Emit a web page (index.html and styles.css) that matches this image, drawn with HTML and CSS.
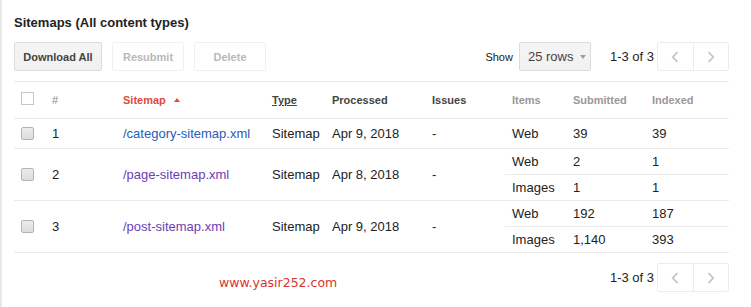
FILE: index.html
```html
<!DOCTYPE html>
<html lang="en">
<head>
    <meta charset="UTF-8">
    <title>Sitemaps</title>
    <link rel="stylesheet" href="styles.css">
</head>
<body>
<div class="page">
    <h2 class="title">Sitemaps (All content types)</h2>

    <div class="toolbar">
        <div class="actions">
            <button class="btn btn-primary">Download All</button>
            <button class="btn btn-disabled">Resubmit</button>
            <button class="btn btn-disabled">Delete</button>
        </div>
        <div class="paging">
            <span class="show-label">Show</span>
            <div class="rows-select">25 rows <span class="caret"></span></div>
            <span class="range">1-3 of 3</span>
            <div class="pager">
                <span class="pager-btn"><svg width="8" height="12" viewBox="0 0 8 12"><path d="M6.5 1 L1.8 6 L6.5 11" fill="none" stroke="#c4c4c4" stroke-width="1.8"/></svg></span>
                <span class="pager-btn"><svg width="8" height="12" viewBox="0 0 8 12"><path d="M1.5 1 L6.2 6 L1.5 11" fill="none" stroke="#c4c4c4" stroke-width="1.8"/></svg></span>
            </div>
        </div>
    </div>

    <table class="sitemaps">
        <colgroup>
            <col style="width:31px"><col style="width:71px"><col style="width:149px">
            <col style="width:60px"><col style="width:100px"><col style="width:80px">
            <col style="width:61px"><col style="width:79px"><col style="width:84px">
        </colgroup>
        <thead>
            <tr>
                <th><span class="check check-empty"></span></th>
                <th class="muted-normal">#</th>
                <th class="sorted">Sitemap <span class="sort-arrow"></span></th>
                <th class="underline">Type</th>
                <th>Processed</th>
                <th>Issues</th>
                <th class="muted">Items</th>
                <th class="muted">Submitted</th>
                <th class="muted">Indexed</th>
            </tr>
        </thead>
        <tbody>
            <tr class="single">
                <td><span class="check"></span></td>
                <td>1</td>
                <td><a href="#" class="link">/category-sitemap.xml</a></td>
                <td>Sitemap</td>
                <td>Apr 9, 2018</td>
                <td>-</td>
                <td>Web</td>
                <td>39</td>
                <td>39</td>
            </tr>
            <tr class="sub">
                <td rowspan="2"><span class="check"></span></td>
                <td rowspan="2">2</td>
                <td rowspan="2"><a href="#" class="link visited">/page-sitemap.xml</a></td>
                <td rowspan="2">Sitemap</td>
                <td rowspan="2">Apr 8, 2018</td>
                <td rowspan="2">-</td>
                <td>Web</td>
                <td>2</td>
                <td>1</td>
            </tr>
            <tr class="sub">
                <td>Images</td>
                <td>1</td>
                <td>1</td>
            </tr>
            <tr class="sub">
                <td rowspan="2"><span class="check"></span></td>
                <td rowspan="2">3</td>
                <td rowspan="2"><a href="#" class="link visited">/post-sitemap.xml</a></td>
                <td rowspan="2">Sitemap</td>
                <td rowspan="2">Apr 9, 2018</td>
                <td rowspan="2">-</td>
                <td>Web</td>
                <td>192</td>
                <td>187</td>
            </tr>
            <tr class="sub">
                <td>Images</td>
                <td>1,140</td>
                <td>393</td>
            </tr>
        </tbody>
    </table>

    <div class="footer">
        <span class="watermark">www.yasir252.com</span>
        <div class="paging">
            <span class="range">1-3 of 3</span>
            <div class="pager">
                <span class="pager-btn"><svg width="8" height="12" viewBox="0 0 8 12"><path d="M6.5 1 L1.8 6 L6.5 11" fill="none" stroke="#c4c4c4" stroke-width="1.8"/></svg></span>
                <span class="pager-btn"><svg width="8" height="12" viewBox="0 0 8 12"><path d="M1.5 1 L6.2 6 L1.5 11" fill="none" stroke="#c4c4c4" stroke-width="1.8"/></svg></span>
            </div>
        </div>
    </div>
</div>
</body>
</html>
```

FILE: styles.css
```css
* {
    box-sizing: border-box;
}

body {
    margin: 0;
    font-family: "Liberation Sans", Arial, sans-serif;
    color: #222;
    background: #fff;
}

.page {
    position: relative;
    height: 307px;
    border-left: 2px solid #e8e8e8;
    padding: 0 22px 0 12px;
}

.title {
    margin: 0;
    padding-top: 15px;
    font-size: 13px;
    line-height: 15px;
    font-weight: bold;
    color: #222;
}

.toolbar {
    display: flex;
    justify-content: space-between;
    align-items: center;
    margin-top: 12px;
    height: 29px;
}

.actions {
    display: flex;
    gap: 10px;
}

.btn {
    height: 29px;
    padding: 0;
    font-family: inherit;
    font-size: 11px;
    font-weight: bold;
    border-radius: 2px;
    border: 1px solid #e6e6e6;
    background: #fff;
    color: #b8b8b8;
}

.btn-primary {
    width: 88px;
    background: linear-gradient(#f5f5f5, #f1f1f1);
    border-color: #dcdcdc;
    color: #444;
}

.btn-disabled {
    width: 72px;
    border-color: #f0f0f0;
}

.paging {
    display: flex;
    align-items: center;
}

.show-label {
    font-size: 11px;
    color: #222;
    margin-right: 6px;
}

.rows-select {
    display: flex;
    align-items: center;
    width: 72px;
    height: 29px;
    padding-left: 8px;
    font-size: 13px;
    color: #444;
    background: linear-gradient(#f5f5f5, #f1f1f1);
    border: 1px solid #dcdcdc;
    border-radius: 2px;
}

.caret {
    margin-left: 7px;
    width: 0;
    height: 0;
    border-left: 3.5px solid transparent;
    border-right: 3.5px solid transparent;
    border-top: 4px solid #a0a0a0;
}

.range {
    font-size: 13px;
    color: #222;
    margin-left: 19px;
    margin-right: 3px;
}

.pager {
    display: flex;
    width: 72px;
    height: 29px;
    border: 1px solid #ececec;
    border-radius: 2px;
}

.pager-btn {
    flex: 1;
    display: flex;
    align-items: center;
    justify-content: center;
}

.pager-btn + .pager-btn {
    border-left: 1px solid #ececec;
}

.sitemaps {
    margin-top: 10px;
    width: 715px;
    table-layout: fixed;
    border-collapse: separate;
    border-spacing: 0;
    border-top: 1px solid #ebebeb;
}

.sitemaps th,
.sitemaps td {
    padding: 0 0 0 7px;
    text-align: left;
    vertical-align: middle;
    border-bottom: 1px solid #ebebeb;
    white-space: nowrap;
}

.sitemaps th {
    height: 37px;
    font-size: 11px;
    font-weight: bold;
    color: #444;
}

.sitemaps td {
    font-size: 13px;
    color: #222;
}

.sitemaps tr.single td {
    height: 30px;
}

.sitemaps tr.sub td {
    height: 26px;
}

.sitemaps th.muted {
    color: #999;
}

.sitemaps th.muted-normal {
    color: #888;
    font-weight: normal;
}

.sitemaps th.sorted {
    color: #dd4b39;
}

.sitemaps th.underline {
    text-decoration: underline;
}

.sort-arrow {
    display: inline-block;
    margin-left: 5px;
    vertical-align: 2px;
    width: 0;
    height: 0;
    border-left: 3.5px solid transparent;
    border-right: 3.5px solid transparent;
    border-bottom: 4px solid #dd4b39;
}

.check {
    display: block;
    width: 13px;
    height: 13px;
    border: 1px solid #b4b4b4;
    border-radius: 2px;
    background: linear-gradient(#ececec, #dcdcdc);
}

.check-empty {
    background: #fff;
    border-color: #c6c6c6;
    border-radius: 0;
    margin-top: -4px;
}

.link {
    color: #2a5bb8;
    text-decoration: none;
}

.link.visited {
    color: #6b3db3;
}

.footer {
    display: flex;
    justify-content: flex-end;
    margin-top: 10px;
}

.watermark {
    position: absolute;
    left: 217px;
    top: 275px;
    font-family: "DejaVu Sans", Verdana, sans-serif;
    font-size: 12.5px;
    color: #d9342b;
}
```
